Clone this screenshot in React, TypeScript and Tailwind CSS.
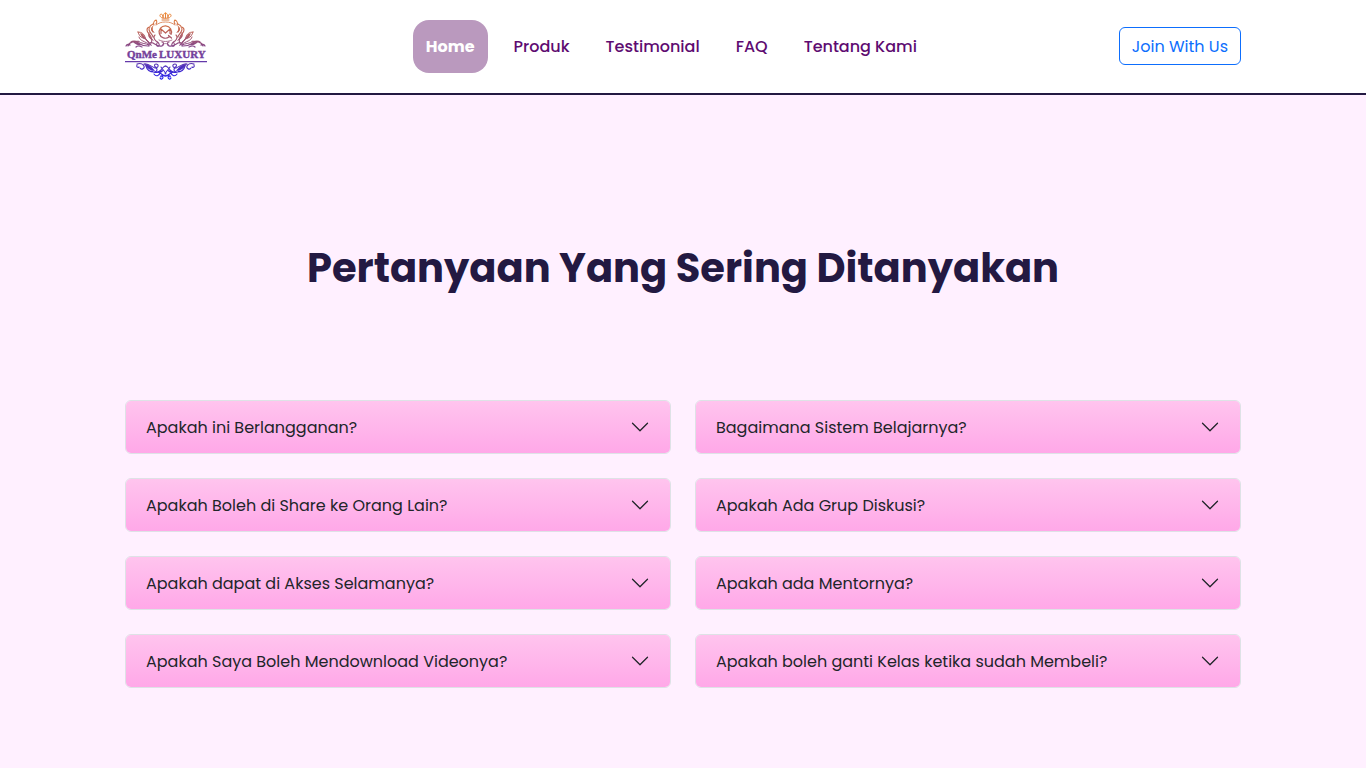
import React, { useState } from "react";

const links = ["Home", "Produk", "Testimonial", "FAQ", "Tentang Kami"];

const faqs = [
  { q: "Apakah ini Berlangganan?", a: "Tidak, cukup satu kali bayar." },
  { q: "Bagaimana Sistem Belajarnya?", a: "Belajar mandiri melalui video." },
  { q: "Apakah Boleh di Share ke Orang Lain?", a: "Tidak, akses hanya untuk pembeli." },
  { q: "Apakah Ada Grup Diskusi?", a: "Ya, tersedia grup diskusi." },
  { q: "Apakah dapat di Akses Selamanya?", a: "Ya, akses berlaku selamanya." },
  { q: "Apakah ada Mentornya?", a: "Ya, mentor siap membantu." },
  { q: "Apakah Saya Boleh Mendownload Videonya?", a: "Video hanya dapat ditonton di kelas." },
  { q: "Apakah boleh ganti Kelas ketika sudah Membeli?", a: "Silakan hubungi admin." },
];

function Flourish() {
  return (
    <g>
      <path
        d="M31 9c-2 1-3 3-2 5M31 9c1 1 1 3 0 4M28 13c-4 2-5 5-3 8 1 2 3 3 3 5M25 16c-2 0-3 1-3 3 0 3 3 4 4 7 1 3 1 5 0 6M27 17c-1 2 0 3 1 4M30 24c-2 2-1 4 1 6 2 1 4 3 3 5-2 1-3-1-2-3"
        strokeWidth="1.1"
      />
      <path
        d="M13 21c4 0 6 2 7 5 1 4 4 6 6 8M13 21c1 3 2 5 5 6 4 1 6 4 8 7M14 26c1 4 5 4 12 8M17 23c2 2 4 6 7 9M13 30c3 3 7 2 11 4"
        strokeWidth="1"
      />
      <path d="M29 14c-2 3-2 5 1 8-4-1-6-5-1-8zM25 20c-2 4 1 6 4 10-5-2-8-6-4-10zM15 22c3 1 5 4 5 6-3-1-4-3-5-6zM8 31c3-1 6 2 9 3-3 1-6 0-9-3z" fill="url(#ink)" stroke="none" />
      <path
        d="M1 35c1-2 3-2 4-1M3 35c2-5 7-5 10-3 3 2 6 3 10 3M6 31c2-2 5-1 8 0M11 36c2-2 4-1 6 0M24 35c-1-2 1-4 4-3 3 2 5 4 9 3 2-1 2-4 0-4"
        strokeWidth="1.2"
      />
      <path
        d="M12 54c-1 2 1 3 2 2M12 53c3-1 6 0 7 2 1 3-3 4-4 2M19 53c4-1 8 3 11 4 4 0 4-4 1-4-2 0-2 3 0 3M21 55c1 4 4 6 8 6 3 0 4-3 2-4M27 60c2 3 7 1 9-1 2-3 3-4 5-4M29 63c2 3 5 2 6-1 2 1 3 3 6 3M35 67c1 2 3 1 3-1-1-2-3-1-2 0M36 56c1 2 3 3 5 7"
        strokeWidth="1.1"
      />
      <path d="M19 53c5 0 8 3 11 7-5 0-8-3-11-7zM31 61c3 0 5-2 8-2-2 3-5 4-8 2z" fill="url(#ink)" stroke="none" />
    </g>
  );
}

function Logo() {
  return (
    <svg viewBox="0 0 82 70" className="h-[70px] w-[82px]" role="img" aria-label="QnMe Luxury">
      <defs>
        <linearGradient id="ink" gradientUnits="userSpaceOnUse" x1="0" y1="2" x2="0" y2="69">
          <stop offset="0" stopColor="#ed8a35" />
          <stop offset=".25" stopColor="#c5664f" />
          <stop offset=".5" stopColor="#85478a" />
          <stop offset=".72" stopColor="#6539a8" />
          <stop offset="1" stopColor="#1717f2" />
        </linearGradient>
      </defs>
      <g fill="none" stroke="url(#ink)" strokeLinecap="round" strokeLinejoin="round">
        <Flourish />
        <g transform="translate(81 0) scale(-1 1)">
          <Flourish />
        </g>
        <path d="M37 9h7M37 7c-2-1-3-3-1-4 1 0 2 1 2 4 0-3 1-5 2.500-5S43 4 43 7c0-3 1-4 2-4 2 1 1 3-1 4zM40.500 2v5" strokeWidth="1" />
        <path d="M31 14c3-2 5-3 9.500-3s6.500 1 9.500 3" strokeWidth=".8" />
        <path d="M44 26a6.200 6.200 0 1 1 2-2.500M36 22.500V18l4.500 4L45 18v4.500M43.500 24.500l3 2.500" strokeWidth="1.200" />
        <path d="M34 29c4 2 9 2 13 0M37 34c2-2 5-2 7 0" strokeWidth=".8" />
      </g>
      <path d="M0 50h82v1.300H0z" fill="url(#ink)" />
      <g fill="url(#ink)" stroke="url(#ink)" strokeWidth=".4" fontFamily="Liberation Serif, serif" fontSize="11" fontWeight="700">
        <text x="2" y="47">QnMe</text>
        <text x="34" y="47">LUXURY</text>
      </g>
    </svg>
  );
}

function Question({ q, a }: { q: string; a: string }) {
  const [open, setOpen] = useState(false);
  return (
    <div className="overflow-hidden rounded-md border border-[#dee2e6]">
      <button
        type="button"
        aria-expanded={open}
        onClick={() => setOpen(!open)}
        className="flex min-h-[52px] w-full items-center justify-between bg-linear-to-b from-[#ffc4ee] to-[#ffa8e8] px-5 py-3 text-left text-base leading-[25px] text-[#212529]"
      >
        {q}
        <svg viewBox="0 0 16 16" className={open ? "size-5 rotate-180" : "size-5"} fill="#212529" aria-hidden="true">
          <path
            fillRule="evenodd"
            d="M1.646 4.646a.5.5 0 0 1 .708 0L8 10.293l5.646-5.647a.5.5 0 0 1 .708.708l-6 6a.5.5 0 0 1-.708 0l-6-6a.5.5 0 0 1 0-.708z"
          />
        </svg>
      </button>
      {open && <p className="bg-white px-5 py-4">{a}</p>}
    </div>
  );
}

export default function App() {
  return (
    <div className="min-h-screen bg-[#fff0ff] font-['Poppins','Inter',sans-serif] text-[#212529]">
      <header className="border-b-2 border-[#231942] bg-white">
        <div className="mx-auto flex max-w-[1140px] items-center justify-between px-3 pt-[11px] pb-3">
          <a href="#home" className="mr-4">
            <Logo />
          </a>
          <nav className="flex items-center gap-3">
            {links.map((label, i) => (
              <a
                key={label}
                href={"#" + label.toLowerCase().replace(" ", "-")}
                className={
                  i === 0
                    ? "mr-0.5 rounded-2xl bg-[#ba99be] px-[13px] py-3.5 text-base leading-[25px] font-bold text-white"
                    : "px-3 py-3.5 text-base leading-[25px] font-medium text-[#5e0b71]"
                }
              >
                {label}
              </a>
            ))}
          </nav>
          <a
            href="#join"
            className="rounded-md border border-[#0d6efd] px-3 pt-1.5 pb-[5px] text-base leading-[25px] text-[#0d6efd]"
          >
            Join With Us
          </a>
        </div>
      </header>
      <main id="faq" className="mx-auto max-w-[1140px] px-3 pt-[149px] pb-20">
        <h1 className="text-center text-[40px] leading-[48px] font-bold text-[#231942]">
          Pertanyaan Yang Sering Ditanyakan
        </h1>
        <div className="mt-[108px] grid grid-cols-1 items-start gap-6 md:grid-cols-2">
          {faqs.map((item) => (
            <Question key={item.q} q={item.q} a={item.a} />
          ))}
        </div>
      </main>
    </div>
  );
}
